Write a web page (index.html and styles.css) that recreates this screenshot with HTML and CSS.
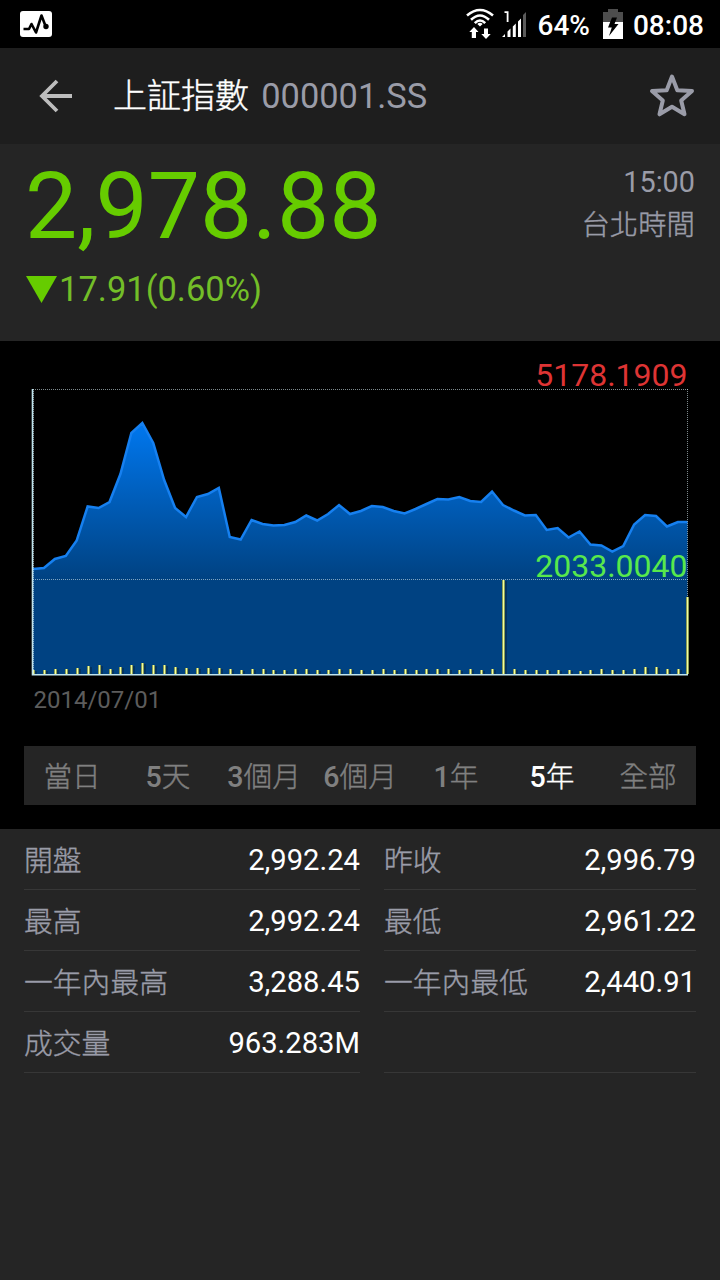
FILE: index.html
```
<!DOCTYPE html>
<html lang="zh-Hant">
<head>
    <meta charset="UTF-8">
    <meta name="viewport" content="width=device-width, initial-scale=1.0">
    <title>上証指數 000001.SS</title>
    <link rel="stylesheet" href="styles.css">
</head>
<body>
<div class="status-bar">
    <svg class="app-icon" width="32" height="26" viewBox="0 0 32 26">
        <rect width="32" height="26" rx="3" fill="#fff"/>
        <path d="M3.5 18H9l2.500-5 4.500 8.500L21.500 4.500 25.500 15" fill="none" stroke="#000" stroke-width="2.600" stroke-linejoin="round"/>
        <circle cx="26" cy="15.500" r="2.700"/>
    </svg>
    <div class="status-right">
        <svg class="wifi" width="28" height="32" viewBox="0 0 28 32">
            <g fill="none" stroke="#fff" stroke-width="2.600">
                <path d="M1 7.500Q14-3.500 27 7.500"/>
                <path d="M5 11.800Q14 3.200 23 11.800"/>
                <path d="M8.800 15.200Q14 9.800 19.200 15.200"/>
            </g>
            <path d="M11.300 16Q14 13.500 16.700 16L14 18.500zM8 19l4.500 5H10v6H5.800V24H3.300zM20 31L15.300 26H18V20.500h4V26H24.700z" fill="#fff"/>
        </svg>
        <svg class="signal" width="24" height="30" viewBox="0 0 24 30">
            <path d="M2.500 3.200H5.600V13" fill="none" stroke="#fff" stroke-width="1.800"/>
            <path d="M0 28l3-3v3zM5.500 22.500l3-3v8.500h-3zM10.800 17.500l3-3V28h-3zM16 12.500l3-3V28h-3z" fill="#fff"/>
            <path d="M21 6l3-3v25h-3z" fill="#5a5a5a"/>
        </svg>
        <span class="percent">64%</span>
        <svg class="battery" width="20" height="30" viewBox="0 0 20 30">
            <path d="M0 3h5V0h10v3h5v10H0z" fill="#4d4d4d"/>
            <path d="M0 13h20v17H0z" fill="#fff"/>
            <path d="M9 8.500h5L11.500 15H15.500L6 27 8.800 18.500H5z" fill="#000"/>
        </svg>
        <span class="clock">08:08</span>
    </div>
</div>

<header class="title-bar">
    <svg class="back" width="34" height="34" viewBox="0 0 34 34">
        <path d="M33 17H3M18 2L3 17l15 15" fill="none" stroke="#bdbdbd" stroke-width="3.800"/>
    </svg>
    <h1>上証指數 <span class="symbol">000001.SS</span></h1>
    <svg class="star" width="46" height="46" viewBox="0 0 46 46">
        <path d="M23 3.500L28.300 17.200 43 18 32.200 27.500 35.500 41.300 23 33.800 10.500 41.300 13.800 27.500 3 18 17.700 17.200z" fill="none" stroke="#9a9ca8" stroke-width="4" stroke-linejoin="round"/>
    </svg>
</header>

<section class="quote">
    <div>
        <div class="price">2,978.88</div>
        <div class="change">
            <svg width="33" height="27" viewBox="0 0 33 27"><path d="M1 0h31L16.500 27z" fill="#66cc00"/></svg>
            <span>17.91(0.60%)</span>
        </div>
    </div>
    <div class="time">
        <div>15:00</div>
        <div class="zone">台北時間</div>
    </div>
</section>

<section class="chart-panel">
    <svg class="chart" width="720" height="381" viewBox="0 0 720 381">
        <defs>
            <linearGradient id="areaFill" gradientUnits="userSpaceOnUse" x1="0" y1="80" x2="0" y2="238">
                <stop offset="0" stop-color="#0078f0"/>
                <stop offset="1" stop-color="#004282"/>
            </linearGradient>
        </defs>
        <path id="area" fill="url(#areaFill)"/>
        <path id="line" class="line"/>
        <path class="grid" d="M33 48.500H688M33 238.500H688M687.500 48V334M33.500 48V334"/>
        <g id="volume"></g>
        <path class="axis" d="M32.500 48V333.800H688"/>
        <text class="high" x="687.500" y="45">5178.1909</text>
        <text class="low" x="687.500" y="236">2033.0040</text>
        <text class="date" x="33.500" y="367">2014/07/01</text>
    </svg>
    <nav class="ranges">
        <span>當日</span>
        <span><b>5</b>天</span>
        <span><b>3</b>個月</span>
        <span><b>6</b>個月</span>
        <span><b>1</b>年</span>
        <span class="active"><b>5</b>年</span>
        <span>全部</span>
    </nav>
</section>

<section class="details">
    <div class="row"><span>開盤</span><b>2,992.24</b></div>
    <div class="row"><span>昨收</span><b>2,996.79</b></div>
    <div class="row"><span>最高</span><b>2,992.24</b></div>
    <div class="row"><span>最低</span><b>2,961.22</b></div>
    <div class="row"><span>一年內最高</span><b>3,288.45</b></div>
    <div class="row"><span>一年內最低</span><b>2,440.91</b></div>
    <div class="row"><span>成交量</span><b>963.283M</b></div>
    <div class="row"></div>
</section>

<script src="chart.js"></script>
</body>
</html>
```
FILE: styles.css
```
* {
    box-sizing: border-box;
}
body {
    margin: 0;
    min-height: 1280px;
    background-color: #252525;
    color: #fff;
    font-family: Roboto, "Noto Sans CJK TC", sans-serif;
    font-size: 28.8px;
}
svg {
    display: block;
    flex-shrink: 0;
}
.status-bar {
    display: flex;
    align-items: center;
    justify-content: space-between;
    height: 48px;
    padding: 0 16px 0 20px;
    background: #000;
    font-weight: 500;
    font-size: 28px;
}
.status-right {
    display: flex;
    align-items: center;
    line-height: 46px;
}
.signal {
    margin-left: 8px;
}
.percent {
    margin: 4px 13px 0 12px;
}
.clock {
    margin: 4px 0 0 10px;
}
.title-bar {
    display: flex;
    align-items: center;
    height: 96px;
    padding: 0 25px 0 39px;
    background: #1e1e1e;
}
h1 {
    flex: 1;
    margin: 0 0 0 40px;
    font-size: 34px;
    font-weight: 300;
    line-height: 48px;
    -webkit-text-stroke: 0.4px;
}
.symbol {
    margin-left: 4px;
    color: #9a9ca8;
    font-size: 34.4px;
    font-weight: 400;
    -webkit-text-stroke: 0;
}
.quote {
    display: flex;
    justify-content: space-between;
    height: 197px;
    padding: 0 25px;
}
.price {
    height: 125px;
    color: #66cc00;
    font-size: 93px;
    line-height: 125px;
}
.change {
    display: flex;
    align-items: center;
    height: 40px;
    color: #73be28;
    font-size: 34.5px;
    line-height: 40px;
}
.change span {
    margin-left: 1px;
}
.time {
    padding-top: 17px;
    color: #9a9ca8;
    line-height: 42px;
    text-align: right;
}
.zone {
    padding-top: 2px;
    font-size: 28.4px;
    font-weight: 300;
    -webkit-text-stroke: 0.4px;
}
.chart-panel {
    height: 488px;
    background: #000;
}
.chart {
    margin-bottom: 24px;
}
.line {
    fill: none;
    stroke: #1680f0;
    stroke-width: 2.5;
}
.grid {
    fill: none;
    stroke: rgba(210, 230, 235, 0.6);
    stroke-dasharray: 1 1;
}
.axis {
    fill: none;
    stroke: #c0e4ee;
    stroke-width: 1.6;
}
.bar {
    fill: #8c9c54;
}
.bar-core {
    fill: #f2ffa0;
}
.bar-shadow {
    fill: #052c50;
    opacity: 0.7;
}
.high, .low {
    font-size: 32px;
    text-anchor: end;
}
.high {
    fill: #de3434;
}
.low {
    fill: #58e84c;
}
.date {
    fill: #5c5c5c;
    font-size: 24px;
}
.ranges {
    display: grid;
    grid-template-columns: repeat(7, 1fr);
    height: 59px;
    margin: 0 24px;
    background: #252525;
    color: #808080;
    font-size: 28.6px;
    font-weight: 300;
    line-height: 62px;
    text-align: center;
    -webkit-text-stroke: 0.4px;
}
.ranges .active {
    color: #fff;
}
.ranges b {
    font-weight: 500;
    -webkit-text-stroke: 0;
}
.details {
    display: grid;
    grid-template-columns: 336px 312px;
    column-gap: 24px;
    padding: 0 24px;
}
.row {
    display: flex;
    justify-content: space-between;
    height: 61px;
    border-bottom: 1px solid #373737;
    line-height: 62px;
}
.row span {
    color: #9a9ca8;
    font-weight: 300;
    line-height: 65px;
    -webkit-text-stroke: 0.4px;
}
.row b {
    font-size: 29.2px;
    font-weight: 400;
}
```
FILE: chart.js
```
// monthly samples, y of the price line inside the chart
const prices = [
    228, 227, 218, 215, 199.5, 165.5, 167, 161, 133, 92, 82, 102, 139, 167, 176,
    156, 153, 147, 196, 198.5, 179, 183, 184.5, 184, 181, 174.5, 179.5, 173, 164, 173,
    170, 165, 166, 170, 172.5, 168, 163, 158, 158.5, 156, 160, 161, 150.5, 164, 169.5,
    174.5, 174, 189, 187, 196.5, 190.5, 203.5, 204.5, 210.5, 205, 183.5, 174, 175, 185.5, 181, 181
];
// height of the volume bars
const volumes = [
    4, 4, 5, 5, 6, 8, 9, 5, 7, 9, 11, 9, 9, 7, 6,
    6, 6, 6, 5, 4, 5, 5, 4, 4, 5, 5, 4, 4, 5, 5,
    4, 4, 5, 4, 5, 4, 5, 5, 5, 4, 5, 4, 5, 94, 5,
    4, 4, 4, 4, 4, 3, 4, 5, 4, 4, 5, 7, 7, 5, 5, 77
];

const left = 33;
const right = 687.5;
const step = 10.93;
const bottom = 333;

const pointX = i => Math.min(left + i * step, right);

const points = prices.map((y, i) => `${pointX(i)},${y}`).join('L');
document.getElementById('line').setAttribute('d', `M${points}`);
document.getElementById('area').setAttribute('d', `M${points}V${bottom}H${left}Z`);

const group = document.getElementById('volume');
function addRect(className, x, y, width, height) {
    const rect = document.createElementNS('http://www.w3.org/2000/svg', 'rect');
    rect.setAttribute('class', className);
    rect.setAttribute('x', x);
    rect.setAttribute('y', y);
    rect.setAttribute('width', width);
    rect.setAttribute('height', height);
    group.appendChild(rect);
}
volumes.forEach((h, i) => {
    const x = Math.min(Math.round(pointX(i)), 687);
    if (i < volumes.length - 1) {
        addRect('bar-shadow', x + 2, bottom - h + 1, 2, h - 1);
    }
    addRect('bar', x - 1, bottom - h, 3, h);
    addRect('bar-core', x, bottom - h, 1, h);
});
```
